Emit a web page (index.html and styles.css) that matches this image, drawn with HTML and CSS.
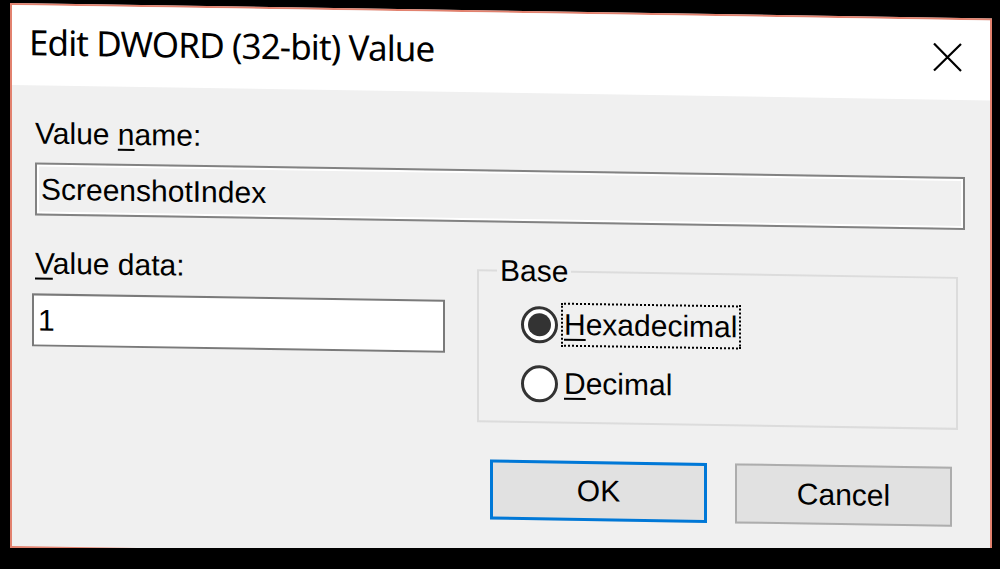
FILE: index.html
```html
<!DOCTYPE html>
<html lang="en">
<head>
    <meta charset="UTF-8">
    <title>Edit DWORD (32-bit) Value</title>
    <link rel="stylesheet" href="styles.css">
</head>
<body>
    <div class="dialog">
        <div class="titlebar">
            <span class="title">Edit DWORD (32-bit) Value</span>
            <button class="close" aria-label="Close">
                <svg width="29" height="29" viewBox="0 0 29 29">
                    <path d="M1 1 L28 28 M28 1 L1 28" stroke="#000" stroke-width="2.2" fill="none"/>
                </svg>
            </button>
        </div>

        <div class="content">
            <div class="label name-label">Value <u>n</u>ame:</div>
            <div class="namebox">ScreenshotIndex</div>

            <div class="row">
                <div class="datacol">
                    <div class="label"><u>V</u>alue data:</div>
                    <div class="databox">1</div>
                </div>

                <fieldset class="base">
                    <legend>Base</legend>
                    <div class="radios">
                        <div class="radio-row">
                            <span class="radio checked"></span>
                            <span class="radio-text focused"><u>H</u>exadecimal</span>
                        </div>
                        <div class="radio-row">
                            <span class="radio"></span>
                            <span class="radio-text"><u>D</u>ecimal</span>
                        </div>
                    </div>
                </fieldset>
            </div>

            <div class="buttons">
                <button class="btn ok">OK</button>
                <button class="btn cancel">Cancel</button>
            </div>
        </div>
    </div>
</body>
</html>
```

FILE: styles.css
```css
body {
    margin: 0;
    background: #000;
    overflow: hidden;
    font-family: "Liberation Sans", Arial, sans-serif;
    color: #000;
}

.dialog {
    width: 982px;
    margin: 3px 0 0 10px;
    box-sizing: border-box;
    border: 2px solid #e2826f;
    background: #f0f0f0;
    transform: skewY(0.9deg);
    transform-origin: 0 0;
}

/* Titelleiste */
.titlebar {
    height: 80px;
    box-sizing: border-box;
    background: #fff;
    display: flex;
    justify-content: space-between;
    align-items: flex-start;
    padding: 17px 28px 0 17px;
}
.title {
    font-family: "Noto Sans", "Open Sans", sans-serif;
    font-size: 35px;
    line-height: 40px;
    letter-spacing: -0.9px;
}
.close {
    border: none;
    background: none;
    padding: 0;
    margin-top: 6px;
    width: 29px;
    height: 29px;
}
.close svg {
    display: block;
}

.content {
    padding: 31px 25px 34px 20px;
}

.label {
    font-size: 30px;
    line-height: 34px;
    margin-left: 3px;
}
u {
    text-decoration-thickness: 2px;
    text-underline-offset: 4px;
}

.namebox {
    margin: 12px 0 0 3px;
    height: 53px;
    box-sizing: border-box;
    border: 2px solid #828282;
    box-shadow: inset 0 0 0 2px #fff;
    font-size: 30px;
    line-height: 49px;
    padding-left: 4px;
}

.row {
    display: flex;
    margin-top: 31px;
    align-items: flex-start;
}
.datacol {
    width: 413px;
    flex: none;
}
.databox {
    margin-top: 13px;
    height: 53px;
    box-sizing: border-box;
    border: 2px solid #7a7a7a;
    background: #fff;
    font-size: 30px;
    line-height: 49px;
    padding-left: 4px;
}

/* Gruppe "Base" */
.base {
    flex: 1;
    margin: 0 7px 0 32px;
    border: 2px solid #dcdcdc;
    padding: 14px 0 16px 0;
    min-width: 0;
}
.base legend {
    font-size: 30px;
    line-height: 34px;
    padding: 0 3px;
    margin-left: 18px;
}
.radios {
    padding-left: 42px;
}
.radio-row {
    display: flex;
    align-items: center;
    height: 44px;
}
.radio-row + .radio-row {
    margin-top: 15px;
}
.radio {
    width: 37px;
    height: 37px;
    box-sizing: border-box;
    border: 3px solid #333;
    border-radius: 50%;
    background: #fff;
    margin-right: 3px;
    position: relative;
    flex: none;
}
.radio.checked::after {
    content: "";
    position: absolute;
    left: 4px;
    top: 4px;
    width: 23px;
    height: 23px;
    border-radius: 50%;
    background: #333;
}
.radio-text {
    font-size: 30px;
    line-height: 34px;
    padding: 3px 2px 3px 1px;
    border: 2px dotted transparent;
}
.radio-text.focused {
    border-color: #000;
}

.buttons {
    display: flex;
    justify-content: flex-end;
    gap: 28px;
    margin: 37px 13px 0 0;
}
.btn {
    width: 217px;
    height: 60px;
    box-sizing: border-box;
    background: #e1e1e1;
    font-family: "Liberation Sans", Arial, sans-serif;
    font-size: 30px;
    color: #000;
    padding: 0;
}
.ok {
    border: 3px solid #0078d7;
}
.cancel {
    border: 2px solid #adadad;
}
```
